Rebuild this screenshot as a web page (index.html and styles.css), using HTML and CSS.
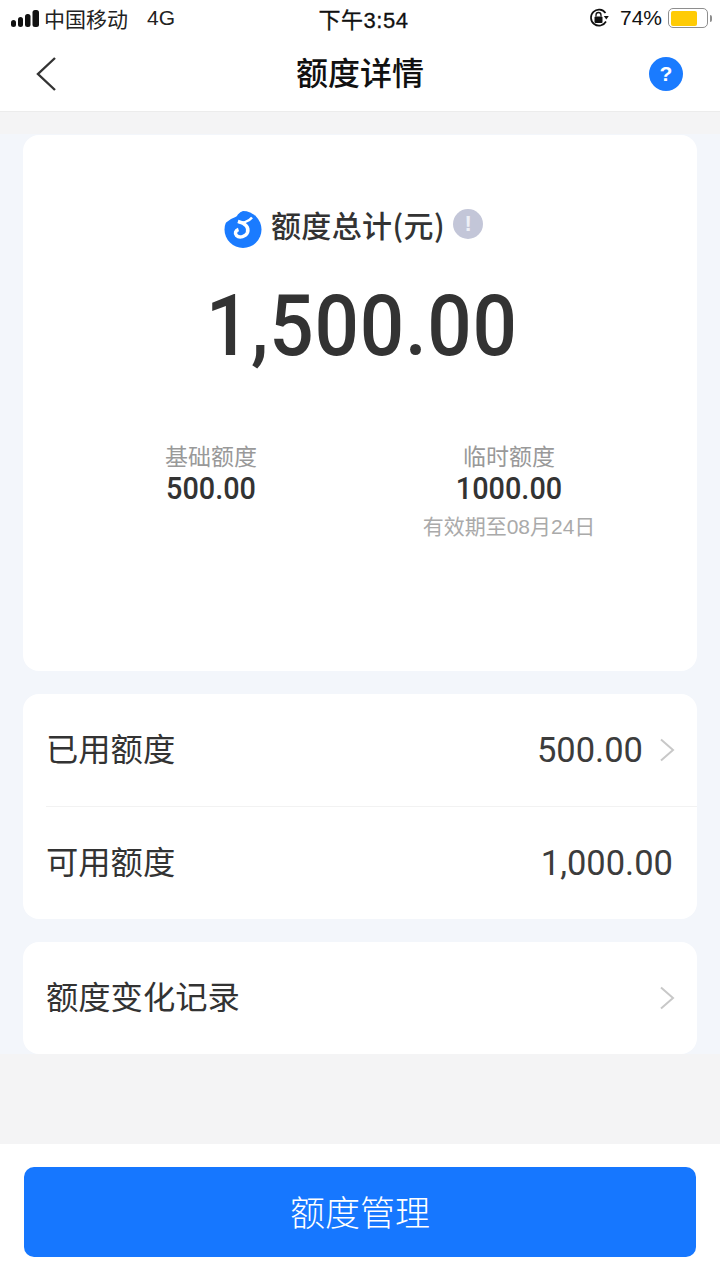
FILE: index.html
```html
<!DOCTYPE html>
<html lang="zh-CN">
<head>
<meta charset="utf-8">
<title>额度详情</title>
<link rel="stylesheet" href="styles.css">
</head>
<body>
<div class="app">
  <header class="top">
    <div class="status">
      <div class="status-left">
        <svg class="signal" width="28" height="17" viewBox="0 0 28 17"><rect x="0" y="10" width="5" height="7" rx="2.500"/><rect x="7" y="7" width="5" height="10" rx="2.500"/><rect x="14" y="4" width="5.500" height="13" rx="2.500"/><rect x="21.500" y="0" width="6.500" height="17" rx="2.500"/></svg>
        <span class="carrier">中国移动</span>
        <span class="net">4G</span>
      </div>
      <div class="status-time">下午3:54</div>
      <div class="status-right">
        <svg class="lock" width="20" height="20" viewBox="0 0 20 20"><path d="M16.500 5A8 8 0 1 0 17 13.500" fill="none" stroke="#111" stroke-width="1.700"/><path d="M14.800 8h5l-2.500 3.400z" fill="#111"/><rect x="5.500" y="8.500" width="8" height="6.500" rx="1" fill="#111"/><path d="M7 8.500V7a2.500 2.500 0 0 1 5 0v1.500" fill="none" stroke="#111" stroke-width="1.300"/></svg>
        <span class="pct">74%</span>
        <div class="battery"><div class="battery-fill"></div></div>
        <div class="battery-tip"></div>
      </div>
    </div>
    <nav class="nav">
      <svg class="back" width="22" height="36" viewBox="0 0 22 36"><path d="M20 2 3 18l17 16" fill="none" stroke="#333" stroke-width="2.400"/></svg>
      <h1 class="title">额度详情</h1>
      <div class="help">?</div>
    </nav>
  </header>

  <main class="content">
    <section class="card summary">
      <div class="sum-head">
        <svg class="logo" width="38" height="38" viewBox="0 0 38 38">
          <circle cx="19" cy="19.500" r="18.500" fill="#1a7bff"/>
          <path d="M0 0h25c-5 0-10 2-12 6-1 1-4 2-6 3L0 14z" fill="#fff"/>
          <path d="M14 11.500c4 2 10 1 14-4" fill="none" stroke="#fff" stroke-width="2.500"/>
          <path d="M14 11.500c8 2 11 6 9.500 11-1.500 4-8 6-11 3-2-2-1-5 2-6" fill="none" stroke="#fff" stroke-width="3.500"/>
          <circle cx="20" cy="6.500" r="3.600" fill="#1a7bff"/>
        </svg>
        <span class="sum-label">额度总计(元)</span>
        <span class="info">!</span>
      </div>
      <div class="sum-total">1,500.00</div>
      <div class="sum-cols">
        <div class="col col-a">
          <div class="col-label">基础额度</div>
          <div class="col-value">500.00</div>
        </div>
        <div class="col col-b">
          <div class="col-label">临时额度</div>
          <div class="col-value">1000.00</div>
          <div class="col-note">有效期至08月24日</div>
        </div>
      </div>
    </section>

    <section class="card list">
      <div class="row">
        <span class="row-label">已用额度</span>
        <span class="row-value">500.00</span>
        <svg class="chev" width="16" height="24" viewBox="0 0 16 24"><path d="M2 1.500 14 12 2 22.500" fill="none" stroke="#c8c8c8" stroke-width="2"/></svg>
      </div>
      <div class="row row-line">
        <span class="row-label">可用额度</span>
        <span class="row-value">1,000.00</span>
      </div>
    </section>

    <section class="card list">
      <div class="row">
        <span class="row-label">额度变化记录</span>
        <svg class="chev" width="16" height="24" viewBox="0 0 16 24"><path d="M2 1.500 14 12 2 22.500" fill="none" stroke="#c8c8c8" stroke-width="2"/></svg>
      </div>
    </section>
  </main>

  <div class="spacer"></div>

  <footer class="footer">
    <button class="cta"><span class="cta-text">额度管理</span></button>
  </footer>
</div>
</body>
</html>
```

FILE: styles.css
```css
* { box-sizing: border-box; }
html, body { margin: 0; padding: 0; }
body {
  width: 720px;
  height: 1280px;
  overflow: hidden;
  background: #f4f4f5;
  font-family: "Noto Sans CJK SC", "Liberation Sans", sans-serif;
  color: #333;
}
.app { width: 720px; height: 1280px; display: flex; flex-direction: column; }

.top { height: 112px; background: #fff; border-bottom: 1px solid #ececec; flex: none; }
.status {
  height: 36px;
  padding: 0 8px 0 11px;
  display: grid;
  grid-template-columns: 1fr auto 1fr;
  align-items: center;
  color: #111;
}
.status-left { display: flex; align-items: center; }
.signal { fill: #111; margin-right: 5px; }
.carrier { font-size: 21px; color: #222; }
.net { font-family: "Liberation Sans", sans-serif; font-size: 21px; margin-left: 19px; color: #222; }
.status-time {
  font-family: "Liberation Sans", "Noto Sans CJK SC", sans-serif;
  font-size: 22px;
  letter-spacing: 0.500px;
  -webkit-text-stroke: 0.300px #111;
  margin-left: 4px;
}
.status-right { display: flex; align-items: center; justify-content: flex-end; }
.lock { margin-right: 11px; }
.pct { font-family: "Liberation Sans", sans-serif; font-size: 21px; margin-right: 6px; }
.battery { width: 40px; height: 20px; border: 1.500px solid #8e8e8e; border-radius: 5px; padding: 1.500px; }
.battery-fill { width: 26px; height: 100%; background: #ffcb05; border-radius: 2px; }
.battery-tip { width: 2px; height: 7px; background: #8e8e8e; margin-left: 2px; border-radius: 0 2px 2px 0; }

.nav {
  height: 75px;
  display: flex;
  align-items: center;
  justify-content: space-between;
  padding: 0 37px 0 35px;
  position: relative;
}
.back { display: block; }
.title {
  margin: 0;
  font-size: 32px;
  font-weight: 500;
  color: #111;
  line-height: 1;
  position: absolute;
  left: 0;
  right: 0;
  top: 19px;
  text-align: center;
}
.help {
  width: 34px;
  height: 34px;
  border-radius: 50%;
  background: #1a7bff;
  color: #fff;
  font-family: "Liberation Sans", sans-serif;
  font-weight: 700;
  font-size: 21px;
  display: flex;
  align-items: center;
  justify-content: center;
}

.content {
  flex: none;
  margin-top: 22px;
  height: 920px;
  background: #f3f6fb;
  padding: 1px 23px 0;
  display: flex;
  flex-direction: column;
  gap: 23px;
}
.card { background: #fff; border-radius: 16px; }

.summary { height: 536px; padding-top: 70px; flex: none; }
.sum-head { height: 44px; display: flex; align-items: center; justify-content: center; padding-right: 13px; }
.logo { margin-right: 9px; margin-top: 4px; }
.sum-label { font-size: 30px; font-weight: 500; color: #333; padding-bottom: 7px; letter-spacing: 0.400px; }
.info {
  width: 30px;
  height: 30px;
  margin-left: 8px;
  margin-bottom: 6px;
  border-radius: 50%;
  background: #c3c6d8;
  color: #eef0f6;
  font-family: "Liberation Sans", sans-serif;
  font-weight: 700;
  font-size: 22px;
  display: flex;
  align-items: center;
  justify-content: center;
}
.sum-total {
  margin-top: 27px;
  padding-left: 4px;
  font-family: Roboto, "Liberation Sans", sans-serif;
  font-weight: 500;
  font-size: 86px;
  line-height: 100px;
  letter-spacing: 0.800px;
  transform: scaleX(0.91);
  text-align: center;
  color: #333;
}
.sum-cols { display: flex; margin-top: 64px; }
.col { text-align: center; }
.col-a { width: 376px; }
.col-b { width: 220px; }
.col-label { font-size: 23px; line-height: 30px; color: #999; }
.col-value {
  font-family: Roboto, "Liberation Sans", sans-serif;
  font-weight: 500;
  font-size: 31px;
  line-height: 32px;
  margin-top: 3px;
  transform: scaleX(0.93);
  color: #333;
}
.col-note {
  font-family: "Liberation Sans", "Noto Sans CJK SC", sans-serif;
  font-size: 21px;
  line-height: 28px;
  margin-top: 8px;
  color: #aaa;
  white-space: nowrap;
}

.list { display: flex; flex-direction: column; }
.row {
  height: 112px;
  display: flex;
  align-items: center;
  padding: 0 23px 0 23px;
}
.row-line { height: 113px; border-top: 1px solid #f2f2f2; margin-left: 23px; padding-left: 0; padding-right: 24px; }
.row-label { font-size: 32.300px; color: #333; flex: 1; padding-bottom: 6px; }
.row-value { font-family: Roboto, "Liberation Sans", sans-serif; font-weight: 400; font-size: 34.500px; color: #3c3c3c; }
.chev { margin-left: 16px; margin-right: -1px; }

.spacer { flex: 1; }
.footer {
  flex: none;
  height: 136px;
  background: #fff;
  padding: 23px 24px 0;
}
.cta {
  display: block;
  width: 672px;
  height: 90px;
  padding: 0 0 4px;
  border: 0;
  border-radius: 10px;
  background: #1677ff;
  color: #fff;
  font-family: "Noto Sans CJK SC", sans-serif;
  font-size: 35px;
  font-weight: 300;
}
```
